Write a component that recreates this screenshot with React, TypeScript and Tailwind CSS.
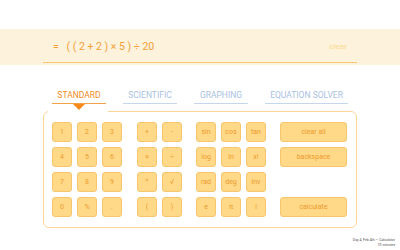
import React from 'react';

const rows = [
  { digits: ['1', '2', '3'], ops: ['+', '-'], sci: ['sin', 'cos', 'tan'], wide: 'clear all' },
  { digits: ['4', '5', '6'], ops: ['×', '÷'], sci: ['log', 'ln', 'x!'], wide: 'backspace' },
  { digits: ['7', '8', '9'], ops: ['^', '√'], sci: ['rad', 'deg', 'inv'], wide: '' },
  { digits: ['0', '%', '.'], ops: ['(', ')'], sci: ['e', 'π', 'i'], wide: 'calculate' },
];

const tabs = [
  { name: 'STANDARD', w: 'w-[54px]', active: true },
  { name: 'SCIENTIFIC', w: 'w-[54px]', active: false },
  { name: 'GRAPHING', w: 'w-[54px]', active: false },
  { name: 'EQUATION SOLVER', w: 'w-[83px]', active: false },
];

const Key = ({ label, wide }: { label: string; wide?: boolean }) => (
  <div
    className={`${wide ? 'w-[67px]' : 'w-[20px]'} h-[20px] rounded-[3px] border border-[#f7c66c] bg-[#ffd987] flex items-center justify-center text-[7px] text-[#ee9a2e]`}
  >
    {label}
  </div>
);

export default function App() {
  return (
    <div className="w-[400px] h-[250px] bg-white relative overflow-hidden font-['Roboto',sans-serif]">
      <div className="pt-[29px]">
        <div className="bg-[#fdf2db] h-[36px] px-[43px]">
          <div className="h-[34px] border-b border-[#f8c77c] flex items-center justify-between pl-[10px] pr-[10px] pt-[2px]">
            <span className="text-[10.5px] text-[#f3a03a] whitespace-pre">{'=   ( ( 2 + 2 ) × 5 ) ÷ 20'}</span>
            <span className="text-[8px] font-medium text-[#fcdc9c]">clear</span>
          </div>
        </div>
      </div>

      <div className="flex gap-[17px] ml-[52px] mt-[25px]">
        {tabs.map((t) => (
          <div
            key={t.name}
            className={`${t.w} relative text-center text-[8.5px] leading-[10px] pb-[3px] border-b whitespace-nowrap ${
              t.active ? 'text-[#f08a1e] border-[#f4a24a]' : 'text-[#a9c1e2] border-[#c6d6ec]'
            }`}
          >
            {t.name}
            {t.active && (
              <div className="absolute left-[21px] top-[14px] w-0 h-0 border-l-[6px] border-r-[6px] border-t-[6px] border-l-transparent border-r-transparent border-t-[#f58a1a]" />
            )}
          </div>
        ))}
      </div>

      <div className="relative ml-[43px] mt-[7px] w-[314px] h-[117px] border border-[#fbd596] rounded-[6px] px-[8px] py-[10px]">
        <div className="absolute left-[4px] top-[-1px] w-[60px] h-[1px] bg-white" />
        <div className="flex flex-col gap-[5px]">
          {rows.map((r, i) => (
            <div key={i} className="flex">
              <div className="flex gap-[5px]">
                {r.digits.map((d) => (
                  <Key key={d} label={d} />
                ))}
              </div>
              <div className="flex gap-[5px] ml-[15px]">
                {r.ops.map((d) => (
                  <Key key={d} label={d} />
                ))}
              </div>
              <div className="flex gap-[5px] ml-[14px]">
                {r.sci.map((d) => (
                  <Key key={d} label={d} />
                ))}
              </div>
              <div className="ml-[14px]">
                {r.wide ? <Key label={r.wide} wide /> : <div className="w-[67px] h-[20px]" />}
              </div>
            </div>
          ))}
        </div>
      </div>

      <div className="absolute right-[5px] top-[238px] text-right text-[3.5px] leading-[5px] text-[#555]">
        <div>Day 4, Feb 4th — Calculator</div>
        <div>70 minutes</div>
      </div>
    </div>
  );
}
